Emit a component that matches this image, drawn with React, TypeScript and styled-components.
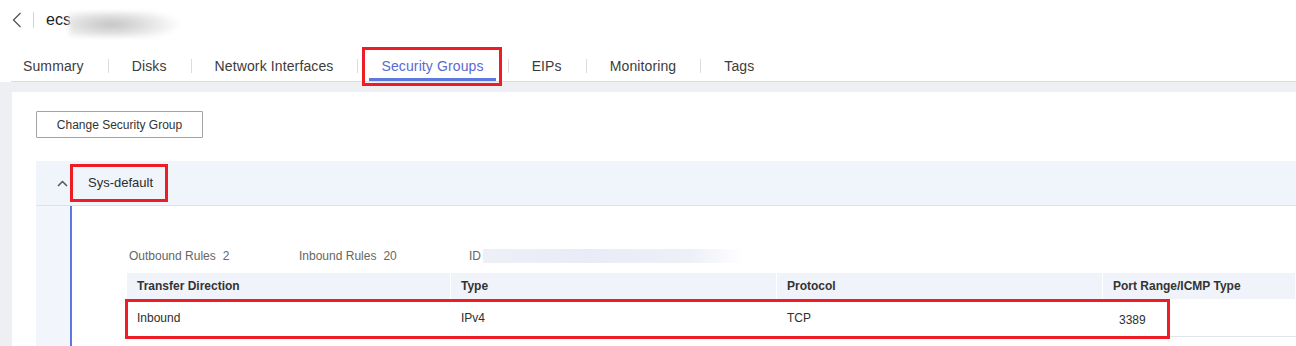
import styled, { createGlobalStyle } from "styled-components";

const GlobalStyle = createGlobalStyle`
    html, body {
        margin: 0;
        padding: 0;
        background: #ffffff;
        font-family: "Liberation Sans", Arial, sans-serif;
        color: #333;
    }
    * {
        box-sizing: border-box;
    }
`;

const Page = styled.div`
    width: 1296px;
    height: 346px;
    overflow: hidden;
    display: flex;
    flex-direction: column;
`;

const Header = styled.div`
    height: 42px;
    display: flex;
    align-items: center;
    padding-left: 12px;
`;

const BackButton = styled.span`
    display: flex;
    width: 10px;
    height: 16px;
    color: #555;
`;

const HeaderDivider = styled.span`
    width: 1px;
    height: 16px;
    background: #d2d2d2;
    margin: 0 12px 0 11px;
`;

const Title = styled.span`
    font-size: 16px;
    color: #222;
    line-height: 22px;
`;

const BlurredName = styled.span`
    width: 110px;
    height: 25px;
    margin-left: -2px;
    margin-top: 8px;
    background: radial-gradient(ellipse 65% 70% at 38% 50%, #c4c4c4 0%, #dedede 45%, #f6f6f6 85%, #ffffff 100%);
    filter: blur(2px);
`;

const TabBar = styled.div`
    display: flex;
    margin: 8px 0 0 11px;
    height: 34px;
    border-bottom: 1px solid #dcdde3;
`;

const Tab = styled.div<{ $active?: boolean; $first?: boolean }>`
    position: relative;
    height: 33px;
    padding: 8px 24px 0 ${(p) => (p.$first ? "12px" : "24px")};
    font-size: 14px;
    line-height: 20px;
    letter-spacing: 0.12px;
    color: ${(p) => (p.$active ? "#5a6ad2" : "#3c3c3c")};
    white-space: nowrap;

    &::before {
        content: "";
        display: ${(p) => (p.$first ? "none" : "block")};
        position: absolute;
        left: 0;
        top: 11px;
        width: 1px;
        height: 14px;
        background: #dcdcdc;
    }

    &::after {
        content: "";
        display: ${(p) => (p.$active ? "block" : "none")};
        position: absolute;
        left: 12px;
        right: 12px;
        bottom: 0;
        height: 3px;
        background: #5e78e0;
    }
`;

const TabMark = styled.span`
    position: absolute;
    left: 5px;
    right: 6px;
    top: -1px;
    bottom: -5px;
    border: 3px solid #ee1c25;
    pointer-events: none;
`;

const Body = styled.div`
    flex: 1;
    background: #eeeff3;
    padding: 10px 0 0 12px;
    display: flex;
`;

const Card = styled.div`
    flex: 1;
    background: #ffffff;
    padding: 19px 0 0 24px;
`;

const Button = styled.button`
    width: 167px;
    height: 27px;
    border: 1px solid #a3a3a3;
    border-radius: 1px;
    background: #fff;
    font-family: inherit;
    font-size: 12px;
    color: #333;
    padding: 0;
    cursor: pointer;
`;

const Group = styled.div`
    margin-top: 23px;
`;

const GroupHeader = styled.div`
    height: 45px;
    display: flex;
    align-items: center;
    padding-left: 21px;
    background: #f0f4fb;
    border-bottom: 1px solid #dfe1e7;
`;

const Chevron = styled.span`
    display: flex;
    width: 11px;
    height: 7px;
    color: #555;
    margin-right: 2px;
`;

const GroupName = styled.span`
    border: 3px solid #ee1c25;
    padding: 7px 12px 7px 15px;
    font-size: 13px;
    line-height: 18px;
    color: #2c2c2c;
`;

const GroupBody = styled.div`
    display: flex;
`;

const Gutter = styled.div`
    width: 34px;
    background: #f2f5fc;
`;

const GroupContent = styled.div`
    flex: 1;
    border-left: 2px solid #5e78e0;
    padding: 41px 0 9px 55px;
`;

const InfoRow = styled.div`
    display: grid;
    grid-template-columns: 170px 170px 1fr;
    padding-left: 2px;
    height: 18px;
    align-items: center;
    font-size: 12px;
    color: #666;
    margin-bottom: 8px;
`;

const InfoItem = styled.span`
    display: flex;
    align-items: center;
    gap: 7px;
`;

const BlurredId = styled.span`
    width: 260px;
    height: 14px;
    margin-left: -5px;
    background: linear-gradient(90deg, #eef0f8 0%, #e9ecf6 40%, #eef0f8 80%, #ffffff 100%);
`;

const Table = styled.div`
    display: flex;
    flex-direction: column;
`;

const Row = styled.div<{ $head?: boolean }>`
    position: relative;
    display: grid;
    grid-template-columns: 324px 326px 326px 1fr;
    height: ${(p) => (p.$head ? "26px" : "38px")};
    background: ${(p) => (p.$head ? "#f0f3fa" : "#ffffff")};
    border-bottom: ${(p) => (p.$head ? "none" : "1px solid #e3e4e8")};
`;

const Cell = styled.div<{ $head?: boolean; $shift?: number }>`
    display: flex;
    align-items: center;
    padding-left: ${(p) => 10 + (p.$shift || 0)}px;
    padding-top: ${(p) => (p.$shift ? 4 : 0)}px;
    font-size: 12px;
    font-weight: ${(p) => (p.$head ? "bold" : "normal")};
    color: ${(p) => (p.$head ? "#333" : "#2e2e2e")};
    border-right: ${(p) => (p.$head ? "1px solid #ffffff" : "none")};
    white-space: nowrap;
`;

const RowMark = styled.span`
    position: absolute;
    left: -2px;
    top: 0;
    width: 1045px;
    bottom: -3px;
    border: 3px solid #ee1c25;
    pointer-events: none;
`;

const tabs = ["Summary", "Disks", "Network Interfaces", "Security Groups", "EIPs", "Monitoring", "Tags"];
const columns = ["Transfer Direction", "Type", "Protocol", "Port Range/ICMP Type"];

export default function App() {
    return (
        <>
            <GlobalStyle />
            <Page>
                <Header>
                    <BackButton>
                        <svg width="10" height="16" viewBox="0 0 10 16" fill="none">
                            <path d="M8.5 1 L1.5 8 L8.5 15" stroke="currentColor" strokeWidth="1.3" />
                        </svg>
                    </BackButton>
                    <HeaderDivider />
                    <Title>ecs</Title>
                    <BlurredName />
                </Header>
                <TabBar>
                    {tabs.map((t, i) => (
                        <Tab key={t} $first={i === 0} $active={t === "Security Groups"}>
                            {t}
                            {t === "Security Groups" ? <TabMark /> : null}
                        </Tab>
                    ))}
                </TabBar>
                <Body>
                    <Card>
                        <Button>Change Security Group</Button>
                        <Group>
                            <GroupHeader>
                                <Chevron>
                                    <svg width="11" height="7" viewBox="0 0 11 7" fill="none">
                                        <path d="M1 6 L5.5 1.5 L10 6" stroke="currentColor" strokeWidth="1.5" />
                                    </svg>
                                </Chevron>
                                <GroupName>Sys-default</GroupName>
                            </GroupHeader>
                            <GroupBody>
                                <Gutter />
                                <GroupContent>
                                    <InfoRow>
                                        <InfoItem>Outbound Rules <span>2</span></InfoItem>
                                        <InfoItem>Inbound Rules <span>20</span></InfoItem>
                                        <InfoItem>ID <BlurredId /></InfoItem>
                                    </InfoRow>
                                    <Table>
                                        <Row $head>
                                            {columns.map((c) => (
                                                <Cell key={c} $head>{c}</Cell>
                                            ))}
                                        </Row>
                                        <Row>
                                            <Cell>Inbound</Cell>
                                            <Cell>IPv4</Cell>
                                            <Cell>TCP</Cell>
                                            <Cell $shift={6}>3389</Cell>
                                            <RowMark />
                                        </Row>
                                    </Table>
                                </GroupContent>
                            </GroupBody>
                        </Group>
                    </Card>
                </Body>
            </Page>
        </>
    );
}
